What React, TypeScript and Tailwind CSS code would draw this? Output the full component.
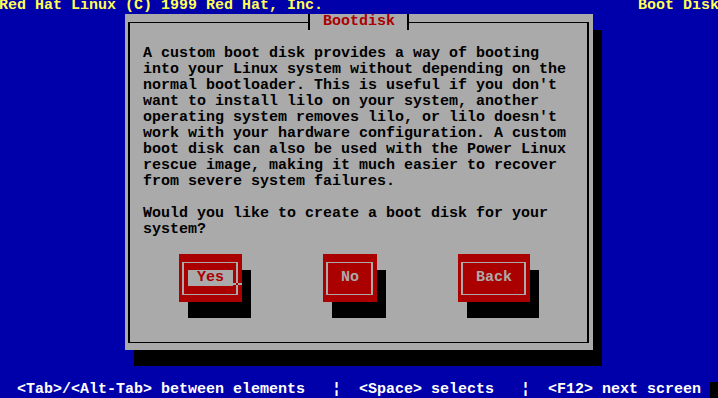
const lines = [
  "A custom boot disk provides a way of booting",
  "into your Linux system without depending on the",
  "normal bootloader. This is useful if you don't",
  "want to install lilo on your system, another",
  "operating system removes lilo, or lilo doesn't",
  "work with your hardware configuration. A custom",
  "boot disk can also be used with the Power Linux",
  "rescue image, making it much easier to recover",
  "from severe system failures.",
  "",
  "Would you like to create a boot disk for your",
  "system?",
];

function Button({ label, width, focused }: { label: string; width: string; focused?: boolean }) {
  return (
    <div className={`relative flex h-12 bg-[#aa0000] shadow-[9px_16px_0_#000] ${width}`}>
      <div className="flex flex-1 items-start mt-[8px] mr-[4px] mb-[7px] ml-[3px] border-x-2 border-y border-[#aaaaaa]">
        <span
          className={
            focused
              ? "ml-[4px] mt-[7px] h-4 whitespace-pre bg-[#aaaaaa] text-[#aa0000]"
              : "ml-[4px] mt-[7px] h-4 whitespace-pre text-[#aaaaaa]"
          }
        >
          {` ${label} `}
        </span>
      </div>
      {focused && (
        // text cursor sitting on the frame
        <div className="absolute left-[54px] top-[29px] flex h-[2px] w-[9px] bg-[#aaaaaa]">
          <div className="ml-[3px] w-[2px] bg-[#aa0000]" />
        </div>
      )}
    </div>
  );
}

export default function App() {
  return (
    <div className="w-[718px] h-[398px] overflow-hidden bg-[#0000aa]">
      <div className="-ml-px flex h-[398px] w-[720px] flex-col font-['Liberation_Mono',monospace] text-[15px] font-bold leading-[16px]">
        <div className="flex h-[14px] justify-between whitespace-pre leading-[12px] text-[#ffff55]">
          <span>Red Hat Linux (C) 1999 Red Hat, Inc.</span>
          <span>Boot Disk</span>
        </div>

        <div className="ml-[126px] flex h-[336px] w-[468px] bg-[#aaaaaa] shadow-[9px_16px_0_#000]">
          <div className="relative flex-1 mt-[8px] mr-[4px] mb-[7px] ml-[3px] border-x-2 border-y border-black">
            <div className="absolute left-[178px] top-[-9px] h-4 w-[101px] border-x-2 border-black bg-[#aaaaaa] pl-[13px] text-[#aa0000]">
              Bootdisk
            </div>
            <div className="pl-[13px] pt-[23px] text-black">
              {lines.map((l, i) => (
                <div key={i} className="h-4 whitespace-pre">
                  {l}
                </div>
              ))}
              <div className="ml-[36px] mt-4 flex gap-[81px]">
                <Button label="Yes" width="w-[63px]" focused />
                <Button label="No" width="w-[54px]" />
                <Button label="Back" width="w-[72px]" />
              </div>
            </div>
          </div>
        </div>

        <div className="mt-auto flex h-4 justify-between whitespace-pre text-white">
          <span>{"  <Tab>/<Alt-Tab> between elements   ¦  <Space> selects   ¦  <F12> next screen"}</span>
          <span className="h-4 w-[9px] bg-black" />
        </div>
      </div>
    </div>
  );
}
